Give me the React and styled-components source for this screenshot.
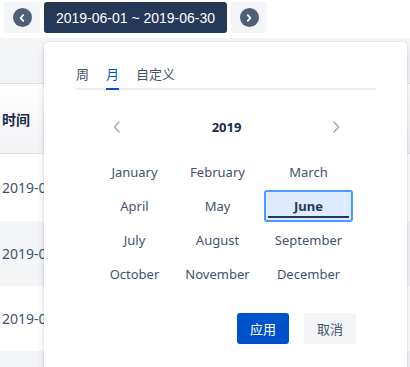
import React, { useState } from 'react';
import styled, { createGlobalStyle } from 'styled-components';

const GlobalStyle = createGlobalStyle`
    html, body {
        margin: 0;
        padding: 0;
        background: #fff;
        font-family: "Noto Sans", "Noto Sans CJK SC", sans-serif;
        overflow: hidden;
    }
`;

const Page = styled.div`
    position: relative;
    width: 410px;
    height: 367px;
    overflow: hidden;
`;

const TopBar = styled.div`
    display: flex;
    flex-direction: row;
    gap: 4px;
    padding: 2px 4px 0 4px;
    height: 31px;
`;

const ArrowBox = styled.button`
    display: flex;
    align-items: center;
    justify-content: center;
    width: 36px;
    height: 31px;
    border: none;
    border-radius: 3px;
    background: #f4f5f7;
    padding: 0;
`;

const ArrowCircle = styled.span`
    display: flex;
    align-items: center;
    justify-content: center;
    width: 19px;
    height: 19px;
    border-radius: 50%;
    background: #505f79;
`;

const RangeButton = styled.button`
    display: flex;
    align-items: center;
    justify-content: center;
    width: 183px;
    height: 31px;
    border: none;
    border-radius: 3px;
    background: #253858;
    color: #fff;
    font-family: "Liberation Sans", Arial, sans-serif;
    font-size: 14px;
    padding: 0;
`;

const Table = styled.div`
    display: flex;
    flex-direction: column;
    margin-top: 5px;
`;

const TableToolbar = styled.div`
    height: 45px;
    background: #f4f5f7;
    border-bottom: 1px solid #dfe1e6;
`;

const HeadRow = styled.div`
    display: flex;
    align-items: center;
    height: 69px;
    padding-left: 2px;
    background: linear-gradient(#ffffff, #f2f3f5);
    border-bottom: 1px solid #dfe1e6;
    font-size: 14px;
    font-weight: 700;
    color: #172b4d;
`;

const BodyRow = styled.div`
    display: flex;
    align-items: center;
    height: ${props => props.h || 65}px;
    padding-left: 2px;
    background: ${props => props.striped ? '#f4f5f7' : '#fff'};
    font-size: 14px;
    color: #42526e;
    white-space: nowrap;
`;

const Popup = styled.div`
    position: absolute;
    left: 44px;
    top: 42px;
    width: 363px;
    height: 340px;
    box-sizing: border-box;
    padding: 22px 31px 0 32px;
    background: #fff;
    border-radius: 4px;
    box-shadow: 0 4px 8px -2px rgba(9, 30, 66, 0.25), 0 0 1px rgba(9, 30, 66, 0.31);
    display: flex;
    flex-direction: column;
`;

const Tabs = styled.div`
    display: flex;
    flex-direction: row;
    gap: 17px;
    border-bottom: 2px solid #ebecf0;
`;

const Tab = styled.div`
    position: relative;
    font-size: 13px;
    line-height: 20px;
    padding-bottom: 4px;
    color: ${props => props.active ? '#0052cc' : '#42526e'};
    &::after {
        content: '';
        display: ${props => props.active ? 'block' : 'none'};
        position: absolute;
        left: 0;
        right: 0;
        bottom: -2px;
        height: 2px;
        background: #0052cc;
    }
`;

const YearRow = styled.div`
    display: flex;
    align-items: center;
    justify-content: space-between;
    margin: 27px 35px 0 36px;
    height: 20px;
`;

const YearLabel = styled.div`
    font-size: 13px;
    font-weight: 700;
    color: #172b4d;
`;

const Chevron = styled.span`
    display: flex;
    align-items: center;
    color: #a5adba;
`;

const MonthGrid = styled.div`
    display: grid;
    grid-template-columns: 73px 87px 89px;
    grid-auto-rows: 32px;
    column-gap: 3px;
    row-gap: 2px;
    margin: 19px 0 0 22px;
`;

const MonthCell = styled.div`
    position: relative;
    display: flex;
    align-items: center;
    justify-content: center;
    box-sizing: border-box;
    font-size: 13px;
    color: ${props => props.selected ? '#253858' : '#42526e'};
    font-weight: ${props => props.selected ? 700 : 400};
    background: ${props => props.selected ? '#deebff' : 'transparent'};
    border: 2px solid ${props => props.selected ? '#4c9aff' : 'transparent'};
    border-radius: 3px;
    &::after {
        content: '';
        display: ${props => props.selected ? 'block' : 'none'};
        position: absolute;
        left: 2px;
        right: 2px;
        bottom: 2px;
        height: 2px;
        background: #253858;
    }
`;

const Footer = styled.div`
    display: flex;
    flex-direction: row;
    gap: 15px;
    margin: 23px 0 0 161px;
`;

const FooterButton = styled.button`
    width: 52px;
    height: 31px;
    border: none;
    border-radius: 3px;
    padding: 0;
    font-family: "Noto Sans", "Noto Sans CJK SC", sans-serif;
    font-size: 13px;
    background: ${props => props.primary ? '#0052cc' : '#f4f5f7'};
    color: ${props => props.primary ? '#fff' : '#42526e'};
`;

const ArrowIcon = ({ dir }) => (
    <svg width="8" height="8" viewBox="0 0 8 8">
        <path d={dir === 'left' ? 'M5.2 1.2 L2.6 4 L5.2 6.8' : 'M2.8 1.2 L5.4 4 L2.8 6.8'}
            fill="none" stroke="#fff" strokeWidth="1.8" strokeLinecap="round" strokeLinejoin="round" />
    </svg>
);

const ChevronIcon = ({ dir }) => (
    <svg width="10" height="14" viewBox="0 0 10 14">
        <path d={dir === 'left' ? 'M7 2 L2.5 7 L7 12' : 'M3 2 L7.5 7 L3 12'}
            fill="none" stroke="currentColor" strokeWidth="1.6" strokeLinecap="round" strokeLinejoin="round" />
    </svg>
);

const months = [
    'January', 'February', 'March',
    'April', 'May', 'June',
    'July', 'August', 'September',
    'October', 'November', 'December',
];

const App = () => {
    const [tab, setTab] = useState('月');
    const [selected, setSelected] = useState('June');

    return (
        <Page>
            <GlobalStyle />
            <TopBar>
                <ArrowBox><ArrowCircle><ArrowIcon dir="left" /></ArrowCircle></ArrowBox>
                <RangeButton>2019-06-01 ~ 2019-06-30</RangeButton>
                <ArrowBox><ArrowCircle><ArrowIcon dir="right" /></ArrowCircle></ArrowBox>
            </TopBar>

            <Table>
                <TableToolbar />
                <HeadRow>时间</HeadRow>
                <BodyRow h={67}>2019-06-01</BodyRow>
                <BodyRow striped>2019-06-02</BodyRow>
                <BodyRow>2019-06-03</BodyRow>
                <BodyRow striped />
            </Table>

            <Popup>
                <Tabs>
                    {['周', '月', '自定义'].map(t => (
                        <Tab key={t} active={tab === t} onClick={() => setTab(t)}>{t}</Tab>
                    ))}
                </Tabs>

                <YearRow>
                    <Chevron><ChevronIcon dir="left" /></Chevron>
                    <YearLabel>2019</YearLabel>
                    <Chevron><ChevronIcon dir="right" /></Chevron>
                </YearRow>

                <MonthGrid>
                    {months.map(m => (
                        <MonthCell key={m} selected={selected === m} onClick={() => setSelected(m)}>{m}</MonthCell>
                    ))}
                </MonthGrid>

                <Footer>
                    <FooterButton primary>应用</FooterButton>
                    <FooterButton>取消</FooterButton>
                </Footer>
            </Popup>
        </Page>
    );
};

export default App;
